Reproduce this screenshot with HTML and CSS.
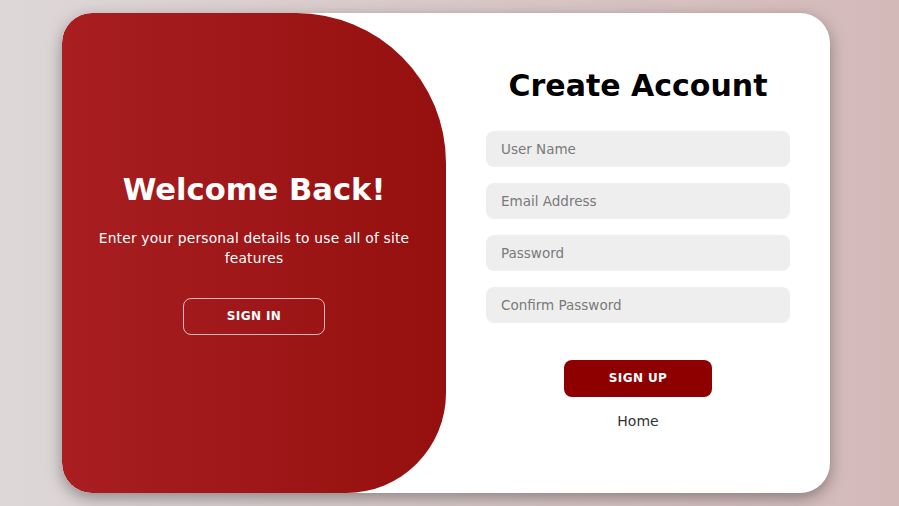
FILE: index.html
```html
<!DOCTYPE html>
<html>
<head>
<meta charset="utf-8">
<link rel="stylesheet" href="styles.css">
</head>
<body>
<div class="card">
  <div class="panel-left">
    <h1 class="welcome">Welcome Back!</h1>
    <p class="lead">Enter your personal details to use all of site features</p>
    <button class="btn-ghost">SIGN IN</button>
  </div>
  <div class="panel-right">
    <h1 class="title">Create Account</h1>
    <div class="fields">
      <div class="field">User Name</div>
      <div class="field">Email Address</div>
      <div class="field">Password</div>
      <div class="field">Confirm Password</div>
    </div>
    <button class="btn-solid">SIGN UP</button>
    <a class="home">Home</a>
  </div>
</div>
</body>
</html>
```
FILE: styles.css
```css
* { box-sizing: border-box; }
html, body { margin: 0; height: 100%; }
body {
  font-family: "DejaVu Sans", sans-serif;
  background: linear-gradient(to right, #ddd7d8, #d4b9b9);
  display: flex;
  align-items: center;
  padding-right: 7px;
  justify-content: center;
}
.card {
  width: 768px;
  height: 480px;
  background: #fff;
  border-radius: 30px;
  box-shadow: 0 5px 15px rgba(0,0,0,0.35);
  display: flex;
  overflow: hidden;
}
.panel-left {
  width: 384px;
  height: 100%;
  background: linear-gradient(to right, #a81e21, #96100f);
  border-radius: 30px 150px 100px 30px;
  color: #fff;
  display: flex;
  flex-direction: column;
  align-items: center;
  justify-content: center;
  padding: 0 30px;
  text-align: center;
}
.welcome {
  margin: 0;
  font-size: 30.6px;
  font-weight: 700;
}
.lead {
  margin: 21px 0 30px;
  font-size: 13.8px;
  line-height: 20px;
  letter-spacing: 0.2px;
}
.btn-ghost {
  width: 142px;
  height: 37px;
  border: 1px solid rgba(255,220,220,0.8);
  border-radius: 8px;
  background: transparent;
  color: #fff;
  font-family: inherit;
  font-weight: 700;
  font-size: 12px;
  letter-spacing: 0.4px;
}
.panel-right {
  flex: 1;
  display: flex;
  flex-direction: column;
  align-items: center;
  justify-content: center;
  padding-bottom: 10px;
}
.title {
  margin: 0 0 28px;
  font-size: 30px;
  font-weight: 700;
  color: #000;
}
.fields {
  display: flex;
  flex-direction: column;
  gap: 16px;
  width: 304px;
}
.field {
  height: 36px;
  background: #eee;
  border-radius: 8px;
  padding: 0 15px;
  display: flex;
  align-items: center;
  color: #7a7a7a;
  font-size: 13.5px;
}
.btn-solid {
  margin-top: 37px;
  width: 148px;
  height: 37px;
  border: none;
  border-radius: 8px;
  background: #8e0000;
  color: #fff;
  font-family: inherit;
  font-weight: 700;
  font-size: 12px;
  letter-spacing: 0.4px;
}
.home {
  margin-top: 16px;
  font-size: 14px;
  color: #333;
}
```
